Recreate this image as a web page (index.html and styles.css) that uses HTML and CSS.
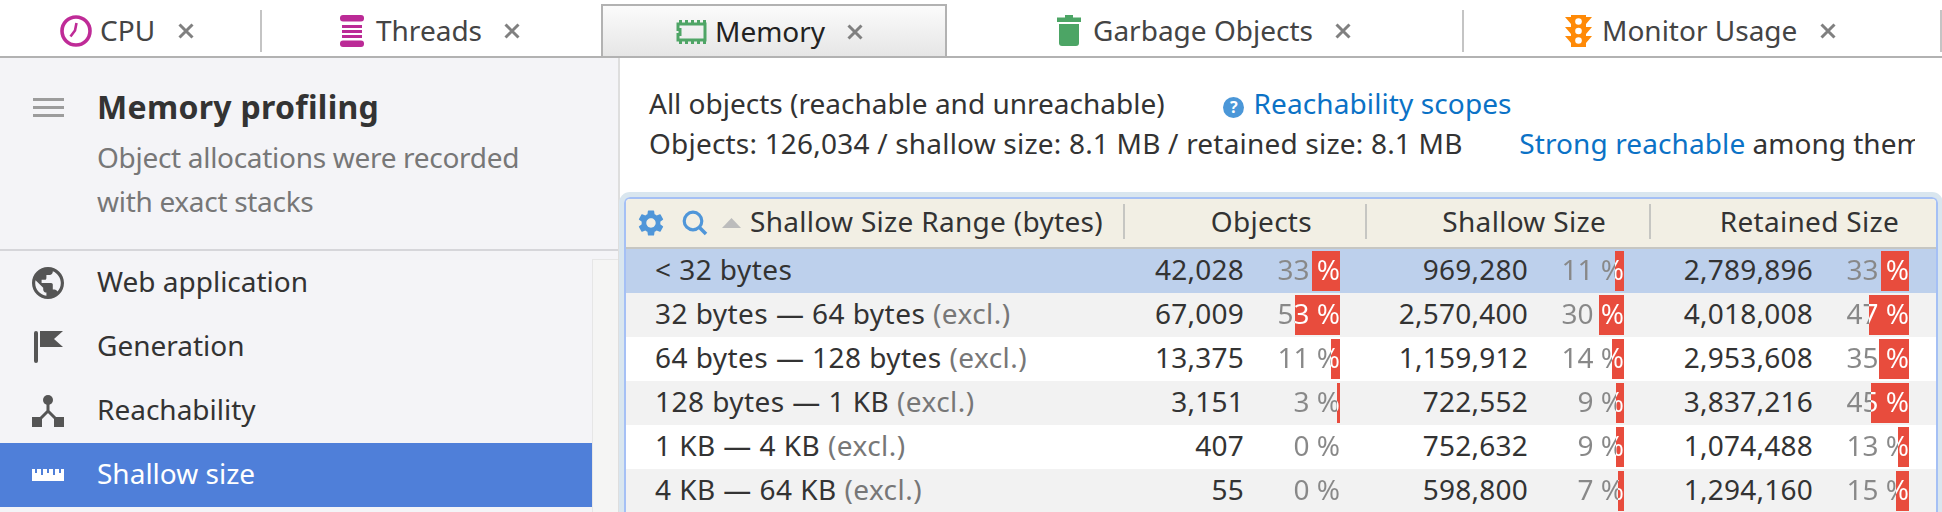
FILE: index.html
```html
<!DOCTYPE html>
<html lang="en">
<head>
<meta charset="utf-8">
<title>Memory profiling</title>
<link rel="stylesheet" href="styles.css">
</head>
<body>
<div class="tabs">
  <div class="tab tab-cpu">
    <svg class="ic-tab" width="32" height="32" viewBox="0 0 32 32"><circle cx="16" cy="16" r="14" fill="none" stroke="#bf2b97" stroke-width="3.6"/><path d="M16.5 8 L15 15.5 L10.5 21.5" fill="none" stroke="#bf2b97" stroke-width="2.6"/></svg>
    <span class="tab-label">CPU</span>
    <svg class="close" width="16" height="16" viewBox="0 0 16 16"><path d="M1.5 1.5 L14.5 14.5 M14.5 1.5 L1.5 14.5" stroke="#808080" stroke-width="3"/></svg>
  </div>
  <div class="tab-sep"></div>
  <div class="tab tab-threads">
    <svg class="ic-tab" width="24" height="32" viewBox="0 0 24 32" fill="#bb2a96"><rect width="24" height="6.5" rx="3"/><rect x="2" y="10" width="20" height="3"/><rect x="2" y="15" width="20" height="3"/><rect x="2" y="20" width="20" height="3"/><rect y="25.5" width="24" height="6.5" rx="3"/></svg>
    <span class="tab-label">Threads</span>
    <svg class="close" width="16" height="16" viewBox="0 0 16 16"><path d="M1.5 1.5 L14.5 14.5 M14.5 1.5 L1.5 14.5" stroke="#808080" stroke-width="3"/></svg>
  </div>
  <div class="tab tab-memory active">
    <svg class="ic-tab" width="31" height="24" viewBox="0 0 31 24" fill="#4fa566"><path d="M2 4 H29 V20 H2 V14.5 H4 V9.5 H2 Z" fill="none" stroke="#4fa566" stroke-width="3"/><rect x="3" y="0" width="3" height="4"/><rect x="9" y="0" width="3" height="4"/><rect x="15" y="0" width="3" height="4"/><rect x="21" y="0" width="3" height="4"/><rect x="27" y="0" width="3" height="4"/><rect x="3" y="20" width="3" height="4"/><rect x="9" y="20" width="3" height="4"/><rect x="15" y="20" width="3" height="4"/><rect x="21" y="20" width="3" height="4"/><rect x="27" y="20" width="3" height="4"/></svg>
    <span class="tab-label">Memory</span>
    <svg class="close" width="16" height="16" viewBox="0 0 16 16"><path d="M1.5 1.5 L14.5 14.5 M14.5 1.5 L1.5 14.5" stroke="#808080" stroke-width="3"/></svg>
  </div>
  <div class="tab tab-garbage">
    <svg class="ic-tab" width="24" height="31" viewBox="0 0 24 31" fill="#4ca565"><path d="M8 0 H16 V2.500 H24 V7 H0 V2.500 H8 Z"/><path d="M2 9 H22 V28 Q22 31 19 31 H5 Q2 31 2 28 Z"/></svg>
    <span class="tab-label">Garbage Objects</span>
    <svg class="close" width="16" height="16" viewBox="0 0 16 16"><path d="M1.500 1.500 L14.500 14.500 M14.500 1.500 L1.500 14.500" stroke="#808080" stroke-width="3"/></svg>
  </div>
  <div class="tab-sep"></div>
  <div class="tab tab-monitor">
    <svg class="ic-tab" width="27" height="32" viewBox="0 0 27 32"><path fill="#ff8a07" d="M6 0 H21 V2 H27 L21 9 V12 H27 L21 19 V21 H27 L21 28 V32 H6 V28 L0 21 H6 V19 L0 12 H6 V9 L0 2 H6 Z"/><circle cx="13.500" cy="6.500" r="3.300" fill="#fff"/><circle cx="13.500" cy="16" r="3.300" fill="#fff"/><circle cx="13.500" cy="25.500" r="3.300" fill="#fff"/></svg>
    <span class="tab-label">Monitor Usage</span>
    <svg class="close" width="16" height="16" viewBox="0 0 16 16"><path d="M1.500 1.500 L14.500 14.500 M14.500 1.500 L1.500 14.500" stroke="#808080" stroke-width="3"/></svg>
  </div>
  <div class="tab-sep"></div>
</div>

<div class="main">
  <aside class="sidebar">
    <header class="side-head">
      <div class="burger"><i></i><i></i><i></i></div>
      <div class="side-text">
        <h1 class="side-title">Memory profiling</h1>
        <p class="side-desc">Object allocations were recorded<br>with exact stacks</p>
      </div>
    </header>
    <div class="side-body">
      <nav class="menu">
        <div class="menu-item">
          <svg class="menu-ic" width="32" height="32" viewBox="2 2 20 20" fill="#555"><path d="M12 2C6.480 2 2 6.480 2 12s4.480 10 10 10 10-4.480 10-10S17.520 2 12 2zm-1 17.930c-3.950-.49-7-3.850-7-7.930 0-.62.08-1.210.21-1.790L9 15v1c0 1.100.9 2 2 2v1.930zm6.900-2.540c-.26-.81-1-1.390-1.900-1.390h-1v-3c0-.55-.45-1-1-1H8v-2h2c.55 0 1-.45 1-1V7h2c1.100 0 2-.9 2-2v-.41c2.930 1.190 5 4.060 5 7.410 0 2.080-.8 3.970-2.100 5.390z"/></svg>
          <span class="menu-label">Web application</span>
        </div>
        <div class="menu-item">
          <svg class="menu-ic" width="32" height="32" viewBox="0 0 32 32" fill="#555"><rect x="2" y="0" width="4" height="32" rx="2"/><polygon points="8,0 31,0 22,8 31,16 8,16"/></svg>
          <span class="menu-label">Generation</span>
        </div>
        <div class="menu-item">
          <svg class="menu-ic" width="32" height="32" viewBox="0 0 32 32" fill="#555"><circle cx="16" cy="5" r="5"/><rect x="0" y="22" width="10" height="10"/><rect x="22" y="22" width="10" height="10"/><path d="M16 9 V16 M16 16 L8 24 M16 16 L24 24" fill="none" stroke="#555" stroke-width="3"/></svg>
          <span class="menu-label">Reachability</span>
        </div>
        <div class="menu-item selected">
          <svg class="menu-ic" width="32" height="12" viewBox="0 0 32 12"><path fill="#fff" d="M0 0 H3 V4 H5 V0 H9 V6 H11 V0 H15 V4 H17 V0 H21 V6 H23 V0 H27 V4 H29 V0 H32 V12 H0 Z"/></svg>
          <span class="menu-label">Shallow size</span>
        </div>
      </nav>
      <div class="track"></div>
    </div>
  </aside>

  <section class="content">
    <div class="summary">
      <div class="sum-line">
        <span class="sum-first">All objects (reachable and unreachable)</span>
        <span class="help">?</span>
        <span class="link">Reachability scopes</span>
      </div>
      <div class="sum-line">
        <span class="sum-stats">Objects: 126,034 / shallow size: 8.1 MB / retained size: 8.1 MB</span>
        <span class="link">Strong reachable</span>&nbsp;among them
      </div>
    </div>

    <div class="table">
      <div class="thead">
        <div class="th th-name">
          <svg width="26" height="26" viewBox="2.500 2 19 20" fill="#4f96d9"><path d="M19.140 12.940c.04-.3.06-.61.06-.94 0-.32-.02-.64-.07-.94l2.030-1.580a.49.49 0 0 0 .12-.61l-1.920-3.320a.488.488 0 0 0-.59-.22l-2.390.96c-.5-.38-1.030-.7-1.620-.94l-.36-2.540a.484.484 0 0 0-.48-.41h-3.840c-.24 0-.43.17-.47.41l-.36 2.540c-.59.24-1.130.57-1.620.94l-2.390-.96c-.22-.08-.47 0-.59.22L2.740 8.870c-.12.21-.08.47.12.61l2.030 1.580c-.05.3-.09.63-.09.94s.02.64.07.94l-2.030 1.580a.49.49 0 0 0-.12.61l1.920 3.320c.12.22.37.29.59.22l2.390-.96c.5.38 1.030.7 1.620.94l.36 2.540c.05.24.24.41.48.41h3.840c.24 0 .44-.17.47-.41l.36-2.540c.59-.24 1.130-.56 1.620-.94l2.390.96c.22.08.47 0 .59-.22l1.920-3.320c.12-.22.07-.47-.12-.61l-2.010-1.580zM12 15.600c-1.980 0-3.600-1.620-3.600-3.600s1.620-3.600 3.600-3.600 3.600 1.620 3.600 3.600-1.620 3.600-3.600 3.600z"/></svg>
          <svg class="th-search" width="26" height="26" viewBox="0 0 26 26"><circle cx="11" cy="11" r="8.800" fill="none" stroke="#4f96d9" stroke-width="3.200"/><path d="M17.500 17.500 L24 24" stroke="#4f96d9" stroke-width="3.600"/></svg>
          <svg class="th-sort" width="19" height="10" viewBox="0 0 19 10"><polygon points="9.500,0 19,10 0,10" fill="#bcbcbc"/></svg>
          <span>Shallow Size Range (bytes)</span>
        </div>
        <div class="th th-obj">Objects</div>
        <div class="th th-sh">Shallow Size</div>
        <div class="th th-ret">Retained Size</div>
      </div>

      <div class="row sel">
        <div class="c-name">&lt; 32 bytes</div>
        <div class="cell"><span class="num">42,028</span><span class="pct" style="--p:33">33 %</span></div>
        <div class="cell"><span class="num">969,280</span><span class="pct" style="--p:11">11 %</span></div>
        <div class="cell"><span class="num">2,789,896</span><span class="pct" style="--p:33">33 %</span></div>
      </div>
      <div class="row alt">
        <div class="c-name">32 bytes — 64 bytes <em>(excl.)</em></div>
        <div class="cell"><span class="num">67,009</span><span class="pct" style="--p:53">53 %</span></div>
        <div class="cell"><span class="num">2,570,400</span><span class="pct" style="--p:30">30 %</span></div>
        <div class="cell"><span class="num">4,018,008</span><span class="pct" style="--p:47">47 %</span></div>
      </div>
      <div class="row">
        <div class="c-name">64 bytes — 128 bytes <em>(excl.)</em></div>
        <div class="cell"><span class="num">13,375</span><span class="pct" style="--p:11">11 %</span></div>
        <div class="cell"><span class="num">1,159,912</span><span class="pct" style="--p:14">14 %</span></div>
        <div class="cell"><span class="num">2,953,608</span><span class="pct" style="--p:35">35 %</span></div>
      </div>
      <div class="row alt">
        <div class="c-name">128 bytes — 1 KB <em>(excl.)</em></div>
        <div class="cell"><span class="num">3,151</span><span class="pct" style="--p:3">3 %</span></div>
        <div class="cell"><span class="num">722,552</span><span class="pct" style="--p:9">9 %</span></div>
        <div class="cell"><span class="num">3,837,216</span><span class="pct" style="--p:45">45 %</span></div>
      </div>
      <div class="row">
        <div class="c-name">1 KB — 4 KB <em>(excl.)</em></div>
        <div class="cell"><span class="num">407</span><span class="pct" style="--p:0">0 %</span></div>
        <div class="cell"><span class="num">752,632</span><span class="pct" style="--p:9">9 %</span></div>
        <div class="cell"><span class="num">1,074,488</span><span class="pct" style="--p:13">13 %</span></div>
      </div>
      <div class="row alt">
        <div class="c-name">4 KB — 64 KB <em>(excl.)</em></div>
        <div class="cell"><span class="num">55</span><span class="pct" style="--p:0">0 %</span></div>
        <div class="cell"><span class="num">598,800</span><span class="pct" style="--p:7">7 %</span></div>
        <div class="cell"><span class="num">1,294,160</span><span class="pct" style="--p:15">15 %</span></div>
      </div>
    </div>
  </section>
</div>
</body>
</html>
```
FILE: styles.css
```css
* { box-sizing: border-box; }
html, body { margin: 0; padding: 0; height: 512px; overflow: hidden; background: #fff; }
body { font-family: "Noto Sans", sans-serif; font-size: 28px; color: #333; width: 1942px; }

/* tab strip */
.tabs { display: flex; height: 58px; border-bottom: 2px solid #b2b2b2; align-items: stretch; }
.tab { display: flex; align-items: center; color: #444; padding-top: 6px; }
.tab-sep { width: 2px; height: 42px; margin-top: 10px; background: #c4c4c4; }
.ic-tab { flex: none; margin-top: -1px; }
.tab-label { white-space: nowrap; padding-bottom: 3px; }
.close { flex: none; }
.tab-cpu { width: 260px; padding-left: 60px; }
.tab-cpu .tab-label { margin-left: 8px; }
.tab-cpu .close { margin-left: 23px; }
.tab-threads { width: 339px; padding-left: 78px; }
.tab-threads .tab-label { margin-left: 12px; }
.tab-threads .close { margin-left: 22px; }
.tab-memory { width: 346px; padding-left: 75px; }
.tab-memory .tab-label { margin-left: 8px; }
.tab-memory .close { margin-left: 22px; }
.tab-garbage { width: 515px; padding-left: 110px; }
.tab-garbage .tab-label { margin-left: 12px; }
.tab-garbage .close { margin-left: 22px; }
.tab-monitor { width: 476px; padding-left: 101px; }
.tab-monitor .tab-label { margin-left: 10px; }
.tab-monitor .close { margin-left: 23px; }
.tab.active {
  margin-top: 4px; padding-top: 2px; color: #222;
  border: 2px solid #b2b2b2; border-bottom: 0; padding-left: 73px;
  background: linear-gradient(#fbfbfb, #e6e6e6);
}

/* layout */
.main { display: flex; height: 454px; }
.sidebar { width: 620px; flex: none; background: #f4f4f7; border-right: 2px solid #dedede; display: flex; flex-direction: column; }
.side-head { height: 193px; flex: none; display: flex; padding-left: 33px; border-bottom: 2px solid #d6d6da; }
.burger { width: 31px; margin-top: 40px; height: 19px; display: flex; flex-direction: column; justify-content: space-between; flex: none; }
.burger i { display: block; height: 3px; background: #9c9c9c; }
.side-text { margin-left: 33px; }
.side-title { margin: 0; padding-top: 27px; font-size: 32px; line-height: 44px; letter-spacing: .3px; font-weight: 700; color: #333; white-space: nowrap; }
.side-desc { margin: 0; padding-top: 6px; line-height: 44px; letter-spacing: -.3px; color: #777; white-space: nowrap; }
.side-body { flex: 1; display: flex; min-height: 0; }
.menu { width: 592px; flex: none; }
.menu-item { height: 64px; display: flex; align-items: center; padding-left: 32px; color: #333; }
.menu-ic { flex: none; margin-right: 33px; }
.menu-label { padding-bottom: 4px; }
.menu-item.selected { background: #4f7fd9; color: #fff; }
.track { flex: 1; margin-top: 8px; background: #f5f5f4; border-left: 1px solid #e6e6e6; border-top: 1px solid #e6e6e6; }

/* right */
.content { flex: 1; min-width: 0; }
.summary { height: 133px; padding: 25px 0 0 29px; width: 1295px; overflow: hidden; color: #333; }
.sum-line { height: 40px; line-height: 40px; white-space: nowrap; }
.sum-first { display: inline-block; width: 567px; }
.sum-stats { display: inline-block; width: 863px; letter-spacing: .2px; }
.link { color: #0b72c6; letter-spacing: .1px; }
.help {
  display: inline-block; width: 21px; height: 21px; border-radius: 50%; background: #4b97d8; color: #fff;
  font-size: 16px; line-height: 21px; font-weight: 700; text-align: center; vertical-align: 1px; margin-right: 2px;
}

.table {
  margin-left: 4px; width: 1314px; height: 315px; overflow: hidden;
  border: 2px solid #a5c0f5; border-bottom: 0; border-radius: 6px 6px 0 0;
  box-shadow: 0 0 0 5px #d9e6ef; margin-top: 6px;
}
.thead, .row { display: grid; grid-template-columns: 499px 242px 284px 1fr; }
.thead { height: 50px; background: #f2efe4; border-bottom: 2px solid #c6c6c2; }
.th { position: relative; display: flex; align-items: center; justify-content: flex-end; color: #333; white-space: nowrap; letter-spacing: .3px; }
.th-name { justify-content: flex-start; padding-left: 12px; }
.th-name span { padding-bottom: 4px; }
.th-search { margin-left: 18px; }
.th-sort { margin-left: 14px; margin-right: 9px; }
.th::after { content: ""; position: absolute; right: 0; top: 5px; bottom: 8px; width: 2px; background: #c6c6c2; }
.th-ret::after { display: none; }
.th-obj { padding: 0 55px 4px 0; }
.th-sh { padding: 0 45px 4px 0; }
.th-ret { padding: 0 37px 4px 0; }

.row { height: 44px; line-height: 40px; background: #fff; color: #333; }
.row:last-child { height: 43px; }
.row.alt { background: #f2f2f2; }
.row.sel { background: #bdd0ec; }
.c-name { padding-left: 29px; white-space: nowrap; letter-spacing: .45px; }
.c-name em { font-style: normal; color: #777; }
.cell { display: flex; justify-content: flex-end; padding-right: 27px; align-items: flex-start; }
.num { margin-right: 11px; letter-spacing: .25px; }
.pct {
  --w: calc(var(--p) * 1%);
  display: block; width: 85px; height: 40px; margin-top: 2px; line-height: 36px; text-align: right; white-space: nowrap;
  color: transparent;
  background-image:
    linear-gradient(to left, #fff var(--w), #888 var(--w)),
    linear-gradient(to left, #e84c3d var(--w), transparent var(--w));
  -webkit-background-clip: text, border-box;
  background-clip: text, border-box;
}
```
